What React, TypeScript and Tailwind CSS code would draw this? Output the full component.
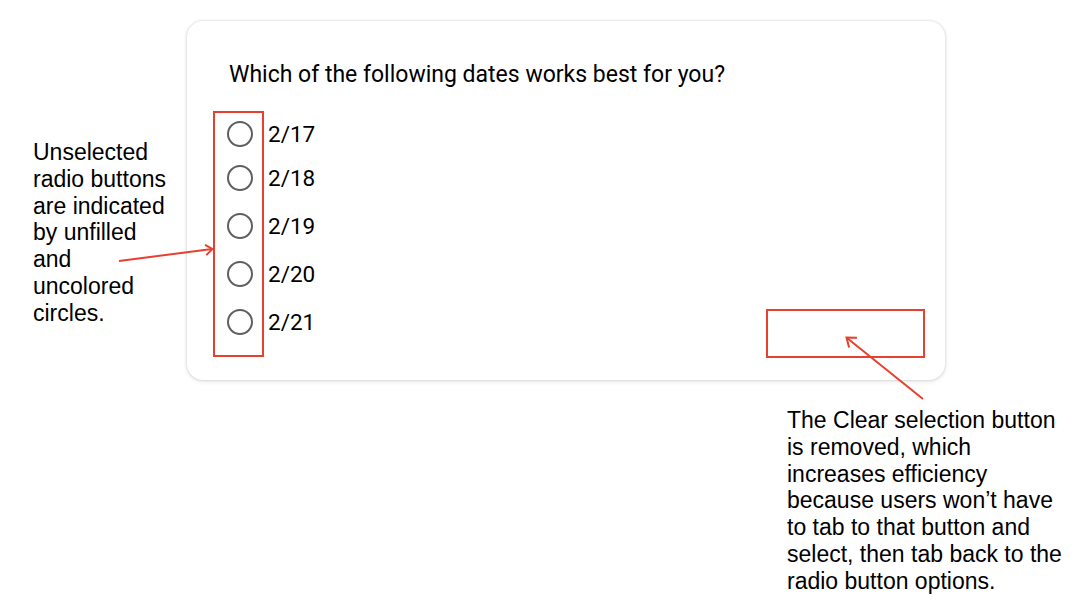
const dates = ["2/17", "2/18", "2/19", "2/20", "2/21"];

function RadioCircle() {
  return (
    <span className="w-[26px] h-[26px] rounded-full border-2 border-[#5f5f5f] flex-shrink-0 box-border" />
  );
}

function Annotations() {
  // red callout boxes + arrows drawn over the form
  return (
    <svg
      className="absolute inset-0 pointer-events-none"
      width="1086"
      height="602"
      viewBox="0 0 1086 602"
      fill="none"
    >
      <rect x="214" y="112" width="49" height="244" stroke="#e8402f" strokeWidth="2" />
      <rect x="767" y="310" width="157" height="47" stroke="#e8402f" strokeWidth="2" />

      <line x1="119" y1="261" x2="212" y2="249" stroke="#e8402f" strokeWidth="2" />
      <path d="M205 244.8 L212.5 249 L206.3 255.1" stroke="#e8402f" strokeWidth="2" />

      <line x1="923" y1="399" x2="847" y2="338" stroke="#e8402f" strokeWidth="2" />
      <path d="M849.1 347.6 L846.5 337.5 L857 337.7" stroke="#e8402f" strokeWidth="2" />
    </svg>
  );
}

export default function App() {
  return (
    <div className="relative w-[1086px] h-[602px] bg-white overflow-hidden">
      <div className="pt-[21px]">
        <div className="flex">
          {/** Left note */}
          <div className="w-[187px] pl-[33px] pt-[118px]">
            <p className="w-[138px] font-['Liberation_Sans',Arial,sans-serif] text-[23px] leading-[26.8px] text-black">
              Unselected radio buttons are indicated by unfilled and uncolored circles.
            </p>
          </div>

          {/** Form card */}
          <div className="w-[758px] h-[359px] bg-white rounded-[16px] shadow-[0_0_3px_rgba(0,0,0,0.18),0_2px_5px_rgba(0,0,0,0.08)] pl-[40px] pt-[40px] font-['Roboto',sans-serif] text-black">
            <p className="pl-[2px] text-[23px] leading-[28px]">Which of the following dates works best for you?</p>
            <div className="mt-[25px] flex flex-col">
              {dates.map((d, i) => (
                <div
                  key={d}
                  className={(i === 0 ? "h-10" : "h-12") + " flex items-center gap-[15px]"}
                >
                  <RadioCircle />
                  <span className="text-[22.5px] leading-none">{d}</span>
                </div>
              ))}
            </div>
          </div>
        </div>

        {/** Right note */}
        <div className="ml-[787px] mt-[27px] w-[284px] font-['Liberation_Sans',Arial,sans-serif] text-[23px] leading-[26.8px] text-black">
          The Clear selection button is removed, which increases efficiency because users won’t have to tab to that button and select, then tab back to the radio button options.
        </div>
      </div>

      <Annotations />
    </div>
  );
}
